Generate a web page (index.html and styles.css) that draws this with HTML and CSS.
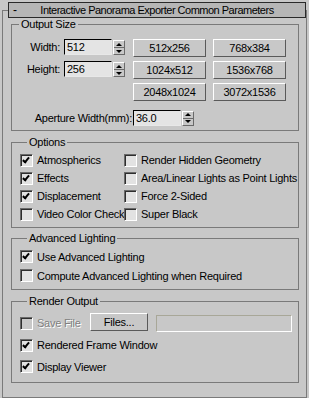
FILE: index.html
```html
<!DOCTYPE html>
<html lang="en">
<head>
    <meta charset="UTF-8">
    <title>Interactive Panorama Exporter</title>
    <link rel="stylesheet" href="styles.css">
</head>
<body>
    <div class="rollout">
        <div class="rollout-title">
            <span class="collapse">-</span>
            <span class="title-text">Interactive Panorama Exporter Common Parameters</span>
        </div>

        <fieldset class="group group-size">
            <legend>Output Size</legend>
            <div class="size-grid">
                <label class="field-label">Width:</label>
                <input class="num" type="text" value="512">
                <div class="spinner"><span class="up"></span><span class="down"></span></div>
                <button>512x256</button>
                <button>768x384</button>

                <label class="field-label">Height:</label>
                <input class="num" type="text" value="256">
                <div class="spinner"><span class="up"></span><span class="down"></span></div>
                <button>1024x512</button>
                <button>1536x768</button>

                <button class="first-btn">2048x1024</button>
                <button>3072x1536</button>
            </div>
            <div class="aperture-row">
                <label class="field-label aperture-label">Aperture Width(mm):</label>
                <input class="num" type="text" value="36.0">
                <div class="spinner"><span class="up"></span><span class="down"></span></div>
            </div>
        </fieldset>

        <fieldset class="group group-options">
            <legend>Options</legend>
            <div class="options-grid">
                <label class="check"><span class="box checked"></span>Atmospherics</label>
                <label class="check"><span class="box"></span>Render Hidden Geometry</label>
                <label class="check"><span class="box checked"></span>Effects</label>
                <label class="check"><span class="box"></span>Area/Linear Lights as Point Lights</label>
                <label class="check"><span class="box checked"></span>Displacement</label>
                <label class="check"><span class="box"></span>Force 2-Sided</label>
                <label class="check"><span class="box"></span>Video Color Check</label>
                <label class="check"><span class="box"></span>Super Black</label>
            </div>
        </fieldset>

        <fieldset class="group group-lighting">
            <legend>Advanced Lighting</legend>
            <label class="check"><span class="box checked"></span>Use Advanced Lighting</label>
            <label class="check"><span class="box"></span>Compute Advanced Lighting when Required</label>
        </fieldset>

        <fieldset class="group group-render">
            <legend>Render Output</legend>
            <div class="save-row">
                <label class="check disabled"><span class="box"></span>Save File</label>
                <button class="files-btn">Files...</button>
                <div class="file-path"></div>
            </div>
            <label class="check"><span class="box checked"></span>Rendered Frame Window</label>
            <label class="check"><span class="box checked"></span>Display Viewer</label>
        </fieldset>
    </div>
</body>
</html>
```

FILE: styles.css
```css
body {
    margin: 0;
    background: #c8c8c8;
    font-family: "Liberation Sans", Arial, sans-serif;
    font-size: 11px;
    letter-spacing: -0.25px;
    color: #000;
}

.rollout {
    box-sizing: border-box;
    width: 305px;
    height: 388px;
    margin: 10px 0 0 2px;
    border: 1px solid #7a7a7a;
}

.rollout-title {
    box-sizing: border-box;
    display: grid;
    grid-template-columns: 1fr auto 1fr;
    align-items: center;
    height: 16px;
    margin: -9px 0 0 5px;
    background: #b6b6b6;
    border: 1px solid #2a2a2a;
    line-height: 14px;
}

.collapse {
    justify-self: start;
    padding-left: 4px;
    font-size: 12px;
}

.title-text {
    letter-spacing: -0.5px;
}

/* group boxes */
.group {
    margin: 5px 7px 0 8px;
    padding: 0;
    border: 1px solid #7a7a7a;
    min-width: 0;
}

.group-size {
    margin-top: 0;
    padding: 8px 0 4px 0;
}

.group legend {
    margin-left: 7px;
    padding: 0 2px;
    line-height: 13px;
}

.size-grid {
    display: grid;
    grid-template-columns: 52px 49px 20px 80px 72px;
    grid-auto-rows: 18px;
    row-gap: 4px;
    align-items: start;
}

.field-label {
    text-align: right;
    padding-right: 4px;
    line-height: 16px;
}

.first-btn {
    grid-column: 4;
}

.num {
    box-sizing: border-box;
    width: 48px;
    height: 16px;
    margin: 0;
    padding: 0 2px;
    font: inherit;
    letter-spacing: inherit;
    background: #e4e4e4;
    border: 1px solid;
    border-color: #000 #e8e8e8 #e8e8e8 #000;
    outline: none;
}

.spinner {
    box-sizing: border-box;
    display: flex;
    flex-direction: column;
    width: 12px;
    height: 15px;
    margin-top: 1px;
    border: 1px solid;
    border-color: #fff #6a6a6a #6a6a6a #fff;
}

.spinner span {
    flex: 1;
    display: flex;
    align-items: center;
    justify-content: center;
}

.spinner .up {
    border-bottom: 1px solid #6a6a6a;
}

.spinner .up::after {
    content: "";
    border: 3px solid transparent;
    border-top: 0;
    border-bottom: 3px solid #000;
}

.spinner .down::after {
    content: "";
    border: 3px solid transparent;
    border-bottom: 0;
    border-top: 3px solid #000;
}

button {
    box-sizing: border-box;
    width: 73px;
    height: 18px;
    margin: 0;
    padding: 0;
    font: inherit;
    letter-spacing: inherit;
    color: #000;
    background: #c8c8c8;
    border: 1px solid;
    border-color: #fff #5a5a5a #5a5a5a #fff;
}

.aperture-row {
    display: flex;
    align-items: center;
    margin-top: 9px;
    height: 16px;
}

.aperture-label {
    width: 121px;
    padding-right: 1px;
    box-sizing: border-box;
}

.aperture-row .spinner {
    margin: 0 0 0 1px;
}

/* check boxes */
.check {
    display: flex;
    align-items: center;
    height: 18px;
    white-space: nowrap;
}

.box {
    box-sizing: border-box;
    position: relative;
    flex: none;
    width: 13px;
    height: 13px;
    margin-right: 4px;
    background: #e2e2e2;
    border: 1px solid;
    border-color: #6a6a6a #fff #fff #6a6a6a;
    box-shadow: inset 1px 1px 0 #2e2e2e;
}

.box.checked::after {
    content: "";
    position: absolute;
    left: 3px;
    top: 1px;
    width: 2px;
    height: 5px;
    border: solid #000;
    border-width: 0 2px 2px 0;
    transform: rotate(40deg);
}

.group-options {
    padding: 2px 0 4px 8px;
}

.options-grid {
    display: grid;
    grid-template-columns: 104px auto;
}

.group-lighting {
    margin-top: 4px;
    padding: 2px 0 4px 8px;
}

.group-lighting .check {
    height: 19px;
}

.group-render {
    padding: 4px 0 5px 8px;
}

.group-render .check {
    height: 22px;
}

.group-render > .check:last-child {
    height: 21px;
}

.save-row {
    display: flex;
    align-items: center;
    height: 22px;
}

.check.disabled {
    width: 70px;
    color: #808080;
    text-shadow: 1px 1px 0 #fff;
}

.check.disabled .box {
    background: #c8c8c8;
}

.files-btn {
    width: 58px;
    margin-top: -2px;
}

.file-path {
    box-sizing: border-box;
    width: 136px;
    height: 17px;
    margin-left: 8px;
    border: 1px solid;
    border-color: #a8a798 #fff #fff #a8a798;
}
```
